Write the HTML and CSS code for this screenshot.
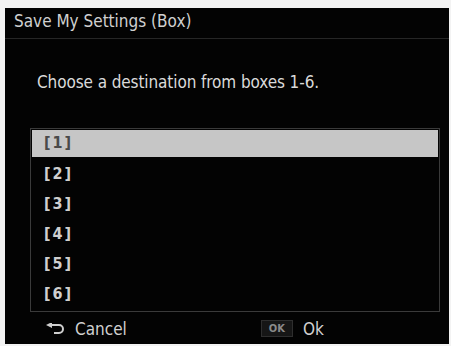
FILE: index.html
```html
<!DOCTYPE html>
<html lang="en">
<head>
    <meta charset="UTF-8">
    <title>Save My Settings (Box)</title>
    <link rel="stylesheet" href="styles.css">
</head>
<body>
    <div class="screen">
        <div class="title-bar">Save My Settings (Box)</div>

        <p class="prompt">Choose a destination from boxes 1-6.</p>

        <ul class="box-list">
            <li class="box-item selected">[ 1 ]</li>
            <li class="box-item">[ 2 ]</li>
            <li class="box-item">[ 3 ]</li>
            <li class="box-item">[ 4 ]</li>
            <li class="box-item">[ 5 ]</li>
            <li class="box-item">[ 6 ]</li>
        </ul>

        <div class="footer">
            <div class="footer-action">
                <svg class="back-icon" width="20" height="12" viewBox="0 0 20 12">
                    <path d="M6 2 H14 a4 4 0 0 1 0 8 H9" fill="none" stroke="#cfcfcf" stroke-width="2"/>
                    <path d="M1 2 L7 -1 L7 5 Z" fill="#cfcfcf"/>
                </svg>
                <span>Cancel</span>
            </div>
            <div class="footer-action">
                <span class="ok-key">OK</span>
                <span>Ok</span>
            </div>
        </div>
    </div>
</body>
</html>
```

FILE: styles.css
```css
* {
    margin: 0;
    padding: 0;
    box-sizing: border-box;
}
body {
    background-color: #f3f3f3;
    font-family: 'DejaVu Sans Condensed', 'DejaVu Sans', sans-serif;
    color: #d8d8d8;
}
.screen {
    background-color: #030303;
    width: 444px;
    height: 336px;
    margin: 8px 0 0 5px;
    display: flex;
    flex-direction: column;
}
.title-bar {
    height: 31px;
    padding: 3px 0 0 9px;
    font-size: 17px;
    color: #d0d0d0;
    border-bottom: 1px solid #262626;
}
.prompt {
    margin: 33px 0 0 32px;
    font-size: 17px;
    color: #dadada;
    letter-spacing: -0.1px;
}
.box-list {
    list-style: none;
    margin: 36px 9px 0 25px;
    border: 1px solid #3a3a3a;
    padding: 1px;
}
.box-item {
    height: 30px;
    line-height: 28px;
    padding-left: 12px;
    font-size: 16px;
    font-weight: bold;
    color: #cfcfcf;
    word-spacing: -3px;
}
.box-item.selected {
    background-color: #c6c6c6;
    color: #4a4a4a;
    height: 27px;
    line-height: 26px;
    margin-bottom: 3px;
}
.footer {
    flex: 1;
    display: flex;
    align-items: center;
    padding: 1px 0 0 40px;
    font-size: 17px;
    color: #d0d0d0;
}
.footer-action {
    display: flex;
    align-items: center;
    gap: 10px;
}
.footer-action + .footer-action {
    margin-left: 134px;
}
.back-icon {
    display: block;
}
.ok-key {
    font-size: 11px;
    font-weight: bold;
    color: #8a8a8a;
    background-color: #161616;
    border: 1px solid #2e2e2e;
    padding: 1px 7px;
}
```
